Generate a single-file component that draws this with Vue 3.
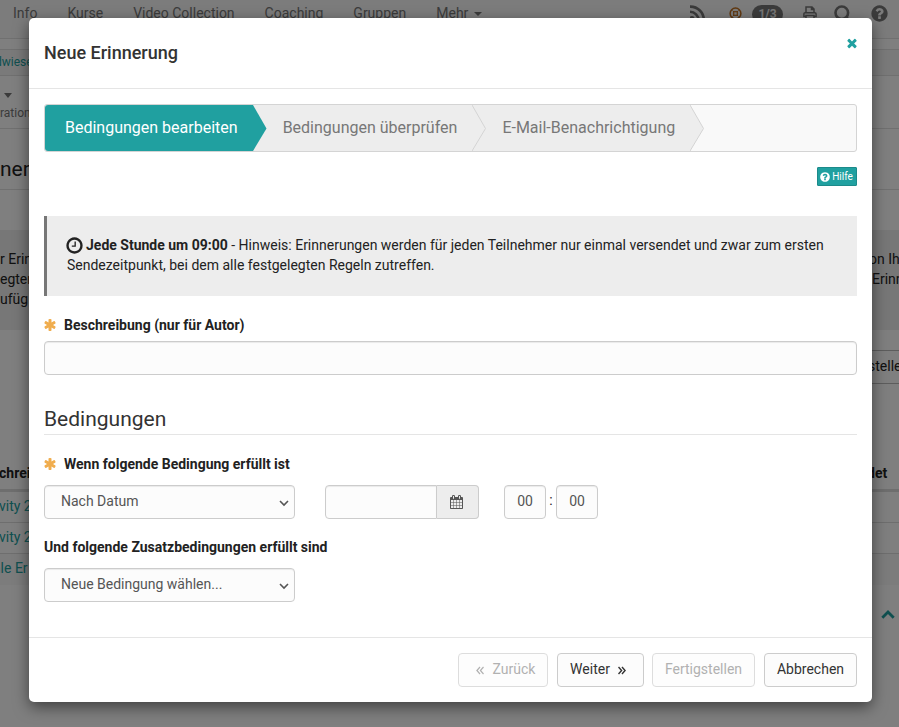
<script setup>
const icons = {
  question: 'M1024 1376v-192q0-14-9-23t-23-9h-192q-14 0-23 9t-9 23v192q0 14 9 23t23 9h192q14 0 23-9t9-23zm256-672q0-88-55.500-163t-138.500-116-170-41q-243 0-371 213-15 24 8 42l132 100q7 6 19 6 16 0 25-12 53-68 86-92 34-24 86-24 48 0 85.500 26t37.500 59q0 38-20 61t-68 45q-63 28-115.500 86.500t-52.500 125.500v36q0 14 9 23t23 9h192q14 0 23-9t9-23q0-19 21.500-49.500t54.500-49.500q32-18 49-28.500t46-35 44.500-48 28-60.500 12.500-81zm384 192q0 209-103 385.500t-279.500 279.500-385.500 103-385.500-103-279.500-279.500-103-385.500 103-385.500 279.500-279.500 385.500-103 385.500 103 279.500 279.500 103 385.500z',
  clock: 'M1024 544v448q0 14-9 23t-23 9h-320q-14 0-23-9t-9-23v-64q0-14 9-23t23-9h224v-352q0-14 9-23t23-9h64q14 0 23 9t9 23zm416 352q0-148-73-273t-198-198-273-73-273 73-198 198-73 273 73 273 198 198 273 73 273-73 198-198 73-273zm224 0q0 209-103 385.500t-279.500 279.500-385.500 103-385.500-103-279.500-279.500-103-385.500 103-385.500 279.500-279.500 385.500-103 385.500 103 279.500 279.500 103 385.500z',
  times: 'M1490 1322q0 40-28 68l-136 136q-28 28-68 28t-68-28l-294-294-294 294q-28 28-68 28t-68-28l-136-136q-28-28-28-68t28-68l294-294-294-294q-28-28-28-68t28-68l136-136q28-28 68-28t68 28l294 294 294-294q28-28 68-28t68 28l136 136q28 28 28 68t-28 68l-294 294 294 294q28 28 28 68z',
  asterisk: 'M1546 1050q46 26 59.500 77.500t-12.500 97.500l-64 110q-26 46-77.500 59.500t-97.500-12.500l-266-153v307q0 52-38 90t-90 38h-128q-52 0-90-38t-38-90v-307l-266 153q-46 26-97.500 12.500t-77.500-59.500l-64-110q-26-46-12.500-97.500t59.500-77.500l266-154-266-154q-46-26-59.500-77.500t12.500-97.500l64-110q26-46 77.500-59.500t97.500 12.500l266 153v-307q0-52 38-90t90-38h128q52 0 90 38t38 90v307l266-153q46-26 97.500-12.500t77.500 59.500l64 110q26 46 12.500 97.500t-59.500 77.500l-266 154z',
  calendar: 'M192 1664h288v-288h-288v288zm352 0h320v-288h-320v288zm-352-352h288v-320h-288v320zm352 0h320v-320h-320v320zm-352-384h288v-288h-288v288zm736 736h320v-288h-320v288zm-384-736h320v-288h-320v288zm768 736h288v-288h-288v288zm-384-352h320v-320h-320v320zm-352-864v-288q0-13-9.500-22.500t-22.500-9.500h-64q-13 0-22.500 9.500t-9.500 22.500v288q0 13 9.500 22.500t22.500 9.500h64q13 0 22.500-9.500t9.500-22.500zm736 864h288v-320h-288v320zm-384-384h320v-288h-320v288zm384 0h288v-288h-288v288zm32-480v-288q0-13-9.500-22.500t-22.500-9.500h-64q-13 0-22.500 9.500t-9.500 22.500v288q0 13 9.500 22.500t22.500 9.500h64q13 0 22.500-9.500t9.500-22.500zm384-64v1280q0 52-38 90t-90 38h-1408q-52 0-90-38t-38-90v-1280q0-52 38-90t90-38h128v-96q0-66 47-113t113-47h64q66 0 113 47t47 113v96h384v-96q0-66 47-113t113-47h64q66 0 113 47t47 113v96h128q52 0 90 38t38 90z',
}
const nav = ['Info', 'Kurse', 'Video Collection', 'Coaching', 'Gruppen']
const steps = ['Bedingungen bearbeiten', 'Bedingungen überprüfen', 'E-Mail-Benachrichtigung']
</script>

<template>
  <div class="screen">
    <div class="page">
      <nav class="nav">
        <span v-for="n in nav" :key="n" class="nav-item">{{ n }}</span>
        <span class="nav-item">Mehr<i class="caret"></i></span>
        <div class="tools">
          <svg class="rss" width="16" height="16" viewBox="0 0 16 16" fill="none" stroke="currentColor" stroke-width="2.600"><path d="M0 1.600A13.400 13.400 0 0 1 13.800 15.400M0 6.800A8.600 8.600 0 0 1 8.600 15.400" /><circle cx="2" cy="13.500" r="1.200" /></svg>
          <svg class="status" width="13" height="13" viewBox="0 0 13 13" fill="none" stroke="currentColor"><circle cx="6.500" cy="6.500" r="5.400" stroke-width="1.500" /><rect x="4.700" y="4.700" width="3.600" height="3.600" stroke-width="1.200" /><path d="M3.500 3.500l1.500 1.500M9.500 3.500L8 5M3.500 9.500L5 8M9.500 9.500L8 8" stroke-width="1" /></svg>
          <span class="badge">1/3</span>
          <svg class="print" width="14" height="14" viewBox="0 0 14 14" fill="none" stroke="currentColor" stroke-width="1.500"><path d="M3 7V1h6l2 2v4M8.500 1v2.500H11M3 10.500H.900V8a1.300 1.300 0 0 1 1.300-1.300h9.600A1.300 1.300 0 0 1 13.100 8v2.500H11M3 9.500h8V13H3z" /></svg>
          <svg class="search" width="18" height="18" viewBox="0 0 18 18" fill="none" stroke="currentColor" stroke-width="2.600"><circle cx="7.800" cy="7.800" r="6.300" /><path d="M12 12l4.500 4.500" /></svg>
          <svg class="help-icon" width="19" height="19" viewBox="0 0 1792 1792" fill="currentColor"><path :d="icons.question" /></svg>
        </div>
      </nav>
      <div class="crumbs"><span>dwiese</span></div>
      <div class="toolbar"><i class="caret big"></i><span>tration</span></div>
      <div class="page-title">ner</div>
      <div class="info">
        <div class="split"><span>r Erin</span><span>on Ihn</span></div>
        <div class="split"><span>egten</span><span class="nudge">Erinn</span></div>
        <div class="split"><span>ufüg</span></div>
      </div>
      <div class="create"><span>stelle</span></div>
      <div class="thead"><span>chrei</span><span>det</span></div>
      <div class="trow">vity 2</div>
      <div class="trow">vity 2</div>
      <div class="trow last">ale Er</div>
      <div class="totop"><svg width="14" height="9" viewBox="0 0 14 9" fill="none" stroke="currentColor" stroke-width="2.800"><path d="M1.300 7.700L7 2l5.700 5.700" /></svg></div>
    </div>
    <div class="backdrop"></div>

    <section class="modal">
      <header class="modal-head">
        <h4>Neue Erinnerung</h4>
        <svg class="close" width="14" height="14" viewBox="0 0 1792 1792" fill="currentColor"><path :d="icons.times" /></svg>
      </header>

      <div class="modal-body">
        <ol class="steps">
          <li v-for="(s, i) in steps" :key="s" :class="{ active: i === 0 }">
            {{ s }}
            <svg class="arrow" width="15" height="46" viewBox="0 0 15 46"><path class="fill" d="M0 0L13.500 23.500L0 46z" /><path class="edge" d="M0 0L13.500 23.500L0 46" /></svg>
          </li>
        </ol>

        <div class="help-row">
          <button class="help"><svg width="10" height="10" viewBox="100 100 1592 1592" fill="currentColor"><path :d="icons.question" /></svg>Hilfe</button>
        </div>

        <p class="callout"><svg width="19" height="19" viewBox="0 0 1792 1792" fill="currentColor"><path :d="icons.clock" /></svg><b>Jede Stunde um 09:00</b> - Hinweis: Erinnerungen werden für jeden Teilnehmer nur einmal versendet und zwar zum ersten Sendezeitpunkt, bei dem alle festgelegten Regeln zutreffen.</p>

        <div class="label first"><svg width="14" height="14" viewBox="0 0 1792 1792" fill="currentColor"><path :d="icons.asterisk" /></svg>Beschreibung (nur für Autor)</div>
        <div class="field"></div>

        <h3>Bedingungen</h3>

        <div class="label second"><svg width="14" height="14" viewBox="0 0 1792 1792" fill="currentColor"><path :d="icons.asterisk" /></svg>Wenn folgende Bedingung erfüllt ist</div>
        <div class="rule">
          <div class="field select">Nach Datum<svg width="10" height="7" viewBox="0 0 10 7" fill="none" stroke="currentColor" stroke-width="1.600"><path d="M1 1l4 4 4-4" /></svg></div>
          <div class="date">
            <div class="field"></div>
            <span class="addon"><svg width="14" height="14" viewBox="64 0 1792 1792" fill="currentColor"><path :d="icons.calendar" /></svg></span>
          </div>
          <div class="time"><div class="field">00</div><span>:</span><div class="field">00</div></div>
        </div>

        <div class="label third">Und folgende Zusatzbedingungen erfüllt sind</div>
        <div class="field select">Neue Bedingung wählen...<svg width="10" height="7" viewBox="0 0 10 7" fill="none" stroke="currentColor" stroke-width="1.600"><path d="M1 1l4 4 4-4" /></svg></div>
      </div>

      <footer class="modal-foot">
        <button class="btn back" disabled><svg width="8" height="9" viewBox="0 0 8 9" fill="none" stroke="currentColor" stroke-width="1.200"><path d="M4 1L.900 4.500 4 8M7.500 1L4.400 4.500 7.500 8" /></svg>Zurück</button>
        <button class="btn next">Weiter<svg width="8" height="9" viewBox="0 0 8 9" fill="none" stroke="currentColor" stroke-width="1.400"><path d="M.500 1l3.100 3.500L.500 8M4 1l3.100 3.500L4 8" /></svg></button>
        <button class="btn finish" disabled>Fertigstellen</button>
        <button class="btn cancel">Abbrechen</button>
      </footer>
    </section>
  </div>
</template>

<style>
body { margin: 0; overflow: hidden; }
</style>

<style scoped>
* { box-sizing: border-box; }
svg { display: block; flex: none; }
.screen { position: relative; width: 899px; height: 727px; overflow: hidden; font: 14px/20px Roboto, "Liberation Sans", sans-serif; color: #222; }
.page { height: 727px; background: #fff; white-space: nowrap; }
.backdrop { position: absolute; inset: 0; background: rgba(0, 0, 0, .5); }

.nav { display: flex; height: 39px; padding: 3px 10px 0 13px; gap: 30px; border-bottom: 1px solid #e0e0e0; background: #f8f8f8; color: #777; }
.nav-item { display: flex; align-items: flex-start; }
.caret { width: 0; height: 0; margin: 9px 0 0 6px; border: 4px solid transparent; border-top-color: currentColor; border-bottom: 0; }
.tools { display: flex; align-items: flex-start; margin-left: auto; }
.rss { margin: 2px 23px 0 0; }
.status { margin: 4px 10px 0 0; color: #c07020; }
.badge { height: 19px; width: 31px; margin: 2px 20px 0 0; border-radius: 10px; background: #777; color: #eee; font-size: 12px; font-weight: 700; line-height: 18px; text-align: center; }
.print { margin: 3px 17px 0 0; }
.search { margin: 2px 18px 0 0; }
.help-icon { margin: 1px 0 0; }
.crumbs { height: 27px; margin-top: 10px; padding-top: 2px; border: 1px solid #e0e0e0; border-width: 1px 0; background: #f5f5f5; font-size: 12px; color: #20a0a0; }
.crumbs span { margin-left: -5px; }
.toolbar { display: flex; flex-direction: column; height: 53px; padding-top: 15px; border-bottom: 1px solid #e0e0e0; font-size: 12px; color: #777; }
.toolbar span { margin: 5px 0 0 -4px; }
.caret.big { margin: 2px 0 0 4px; border-width: 5px 4.500px 0; }
.page-title { height: 61px; padding-top: 30px; border-bottom: 1px solid #e0e0e0; font-size: 21px; }
.info { height: 100px; margin-top: 40px; padding-top: 19px; background: #eee; }
.split, .thead { display: grid; grid-template-columns: 869px 1fr; }
.nudge { padding-left: 3px; }
.create { height: 34px; margin: 20px 0 0 800px; padding: 5px 0 0 67px; border: 1px solid #bbb; border-right: 0; overflow: hidden; }
.thead { height: 108px; padding-top: 79px; border-bottom: 3px solid #ddd; font-weight: 700; margin-left: -1px; }
.thead span + span { margin-left: -1px; }
.trow { height: 31px; padding-top: 4px; border-bottom: 1px solid #ddd; color: #20a0a0; }
.trow:not(.last) { margin-left: -1px; }
.trow.last { border: 0; background: #f9f9f9; text-indent: -7px; }
.totop { display: flex; justify-content: flex-end; padding: 25px 4px 0 0; color: #20a0a0; }

.modal { position: absolute; left: 29px; top: 18px; width: 843px; height: 684px; border-radius: 5px; background: #fff; box-shadow: 0 5px 15px rgba(0, 0, 0, .5); }
.modal-head { display: flex; justify-content: space-between; height: 71px; padding: 15px 13px 0 15px; border-bottom: 1px solid #e5e5e5; }
h4 { margin: 10px 0 0; font-size: 18px; font-weight: 500; line-height: 20px; color: #333; }
.close { margin-top: 3px; color: #20a0a0; }
.modal-body { height: 548px; padding: 15px; }

.steps { display: flex; width: 813px; height: 48px; margin: 0; padding: 0; border: 1px solid #d4d4d4; border-radius: 3px; background: #f9f9f9; list-style: none; font-size: 16px; line-height: 45px; color: #777; }
.steps li { position: relative; padding: 0 15px 0 30px; background: #ededed; white-space: nowrap; }
.steps li.active { z-index: 1; padding-left: 20px; border-radius: 3px 0 0 3px; background: #20a0a0; color: #fff; }
.arrow { position: absolute; left: 100%; top: 0; z-index: 1; }
.fill { fill: #ededed; }
.edge { fill: none; stroke: #d4d4d4; }
.active .fill { fill: #20a0a0; }
.active .edge { stroke: none; }

.help-row { display: flex; justify-content: flex-end; height: 64px; padding-top: 15px; }
.help { display: flex; align-items: center; justify-content: center; gap: 2px; width: 40px; height: 19px; padding: 0 1px 0 0; border: 1px solid #1c8a8a; border-radius: 1px; background: #20a0a0; color: #fff; font: 10px Roboto, sans-serif; }
.callout { height: 80px; margin: 0; padding: 19px 20px; border-left: 3px solid #777; background: #ededed; }
.callout svg { display: inline-block; margin: 0 2px 0 -2px; vertical-align: -5px; height: 19px; }

.label { display: flex; align-items: center; height: 20px; font-weight: 700; }
.label svg { margin: 0 7px 0 -1px; color: #f0ad4e; }
.first { margin: 19px 0 6px; }
.second { margin: 19px 0 11px; }
.third { margin: 18px 0 11px; }
.field { height: 34px; border: 1px solid #ccc; border-radius: 4px; background: #fcfcfc; box-shadow: inset 0 1px 1px rgba(0, 0, 0, .075); color: #555; line-height: 31px; }
.select { display: flex; align-items: center; justify-content: space-between; width: 251px; padding: 0 5px 2px 16px; }
.select svg { margin-top: 4px; }
h3 { height: 60px; margin: 0; padding-top: 32px; border-bottom: 1px solid #e5e5e5; font-size: 21px; font-weight: 400; line-height: 24px; color: #333; }
.rule { display: flex; }
.date { display: flex; width: 154px; margin: 0 25px 0 30px; }
.date .field { flex: 1; border-radius: 4px 0 0 4px; }
.addon { display: flex; align-items: center; justify-content: center; width: 42px; height: 34px; border: 1px solid #ccc; border-left: 0; border-radius: 0 4px 4px 0; background: #ededed; color: #555; }
.addon svg { margin-right: 2px; }
.time { display: flex; }
.time .field { width: 42px; text-align: center; }
.time span { width: 10px; line-height: 31px; text-align: center; }

.modal-foot { display: flex; justify-content: flex-end; height: 65px; padding: 15px 15px 0; border-top: 1px solid #e5e5e5; }
.btn { display: flex; align-items: center; justify-content: center; height: 34px; padding: 0 0 2px; border: 1px solid #ccc; border-radius: 4px; background: #fcfcfc; color: #333; font: 14px Roboto, sans-serif; }
.btn:disabled { opacity: .65; color: #888; }
.back { width: 90px; gap: 9px; margin-right: 9px; padding-left: 5px; }
.next { width: 87px; gap: 8px; margin-right: 8px; padding-right: 5px; }
.finish { width: 103px; margin-right: 9px; }
.cancel { width: 93px; }
.btn svg { margin-top: 2px; }
</style>
